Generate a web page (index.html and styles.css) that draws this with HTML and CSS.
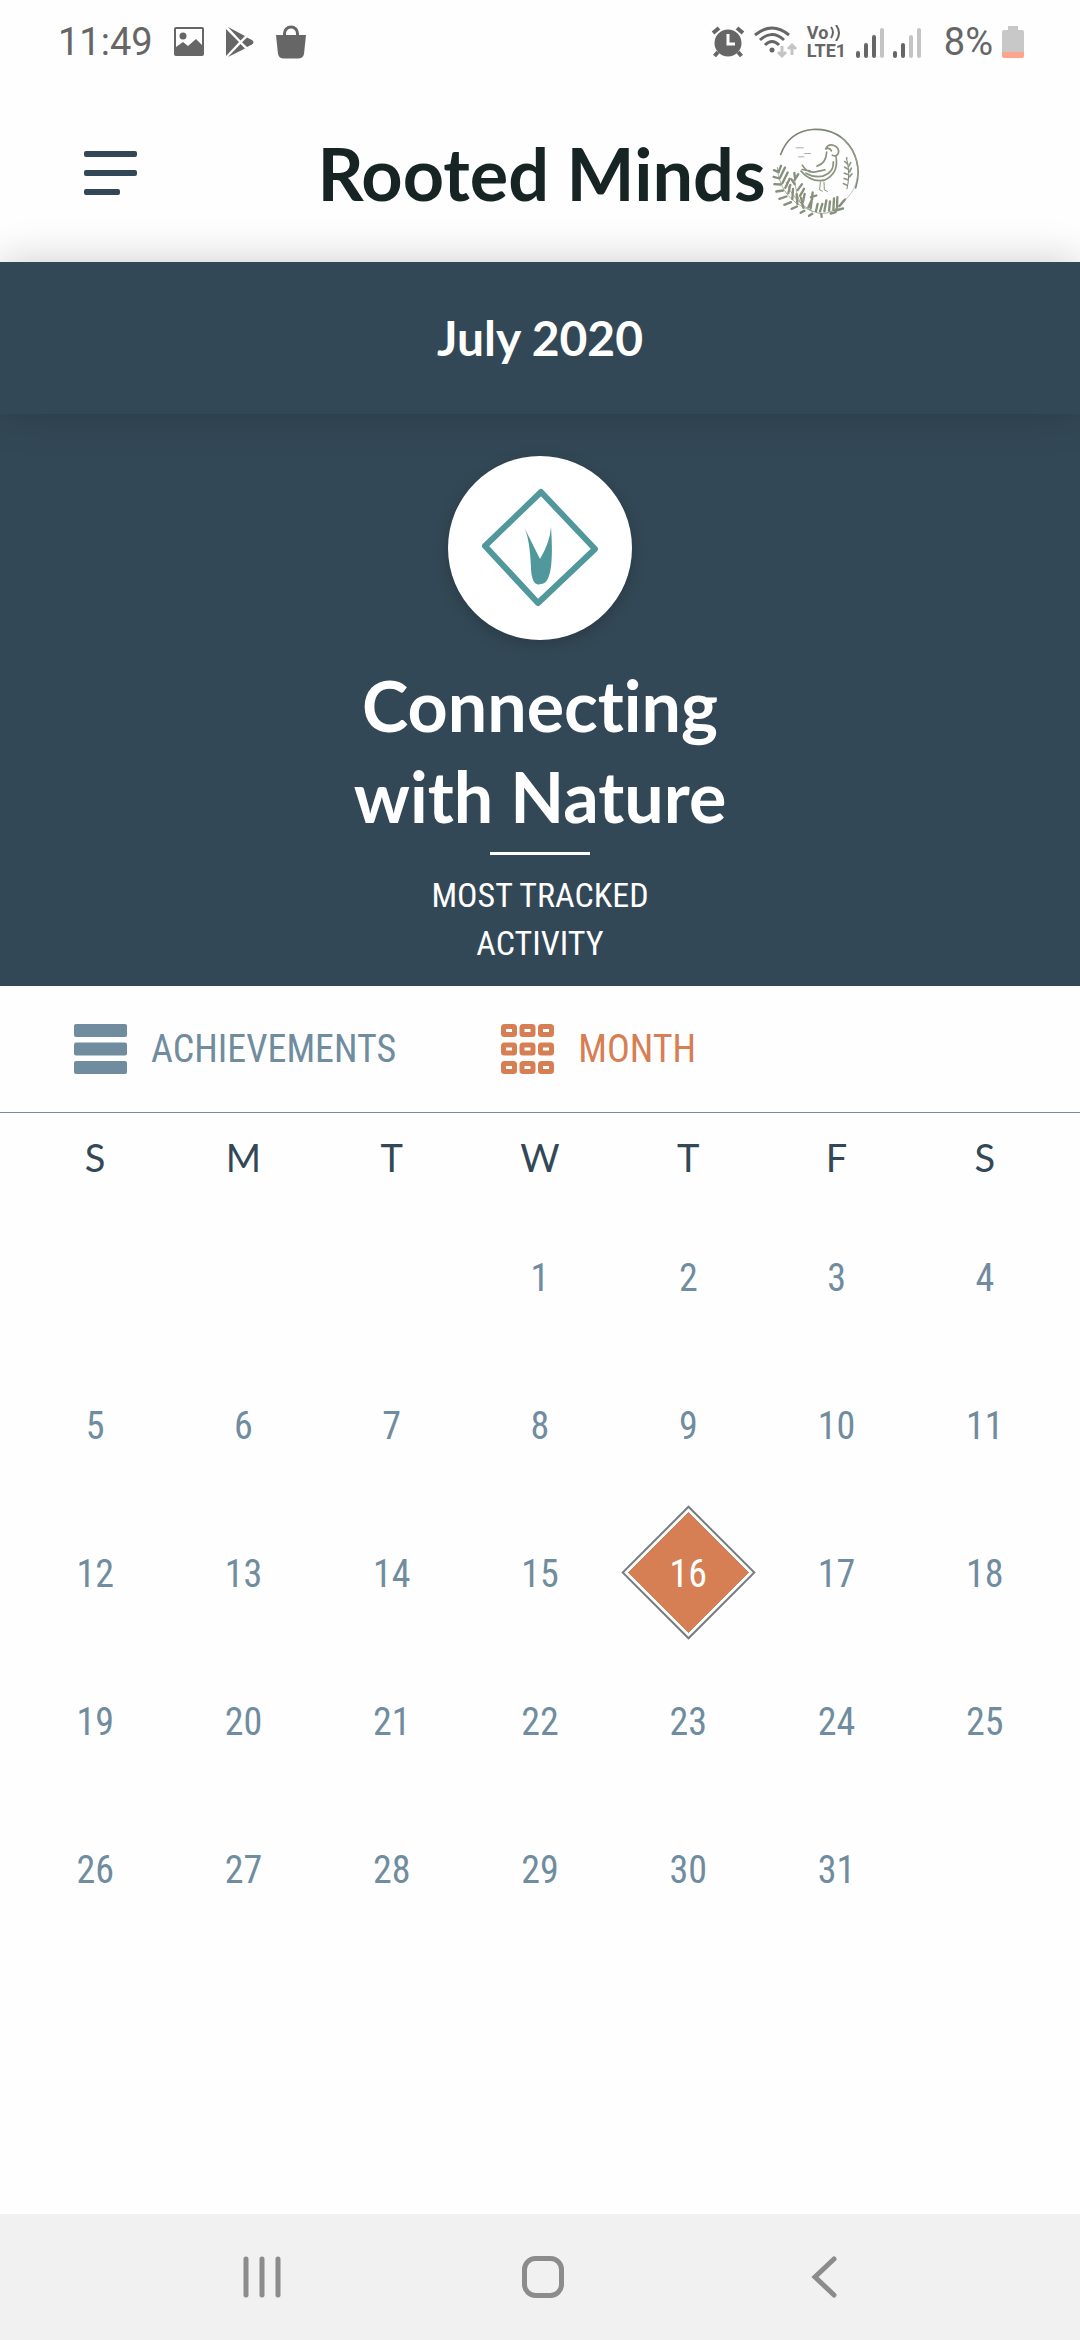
FILE: index.html
```html
<!DOCTYPE html>
<html lang="en">
<head>
<meta charset="utf-8">
<meta name="viewport" content="width=device-width, initial-scale=1">
<title>Rooted Minds</title>
<link rel="stylesheet" href="styles.css">
</head>
<body>
<div class="status-bar">
  <div class="status-left">
    <span class="status-text">11:49</span>
    <svg class="icon" width="32" height="34" viewBox="0 0 32 34" aria-hidden="true"><path fill-rule="evenodd" d="M3 2H29Q31 2 31 4V29Q31 31 29 31H3Q1 31 1 29V4Q1 2 3 2ZM3 4V22L10 17L15 21L23 14L29 20V4ZM10 7.500A3.500 3.500 0 1 1 10 14.500A3.500 3.500 0 1 1 10 7.500Z"/></svg>
    <svg class="icon" width="30" height="34" viewBox="0 0 30 34" aria-hidden="true"><path d="M1 4L14 17L1 31ZM3 2L20 11L15.500 15.500ZM3 32L15.500 19L20 23.500ZM22 12.500L27 15Q30 17.300 27 19.500L22 22L17 17.200Z"/></svg>
    <svg class="icon" width="32" height="34" viewBox="0 0 32 34" aria-hidden="true"><path d="M1 10H31L29 29Q28 33.500 23 33.500H9Q4 33.500 3 29Z"/><path d="M9.500 12V8.500A6.500 6.500 0 0 1 22.500 8.500V12" fill="none" stroke="#666" stroke-width="3"/></svg>
  </div>
  <div class="status-right">
    <svg class="icon" width="34" height="34" viewBox="0 0 34 34" aria-hidden="true"><path d="M7 27L3.500 31M27 27L30.500 31M2 8L8 3M32 8L26 3" fill="none" stroke="#666" stroke-width="4"/><circle cx="17" cy="18" r="13.500"/><path d="M17 9V19H24" fill="none" stroke="#fff" stroke-width="3"/></svg>
    <svg class="icon" width="44" height="34" viewBox="0 0 44 34" aria-hidden="true"><g fill="none" stroke="#666" stroke-width="3"><path d="M1 10Q18-4 35 10"/><path d="M6 15Q18 4 30 15"/><path d="M11 20Q18 13 25 20"/></g><circle cx="18" cy="25" r="2.500"/><path d="M28 21V31M24 27L28 31L32 27M38 30V20M34 24L38 20L42 24" fill="none" stroke="#c4c4c4" stroke-width="3"/></svg>
    <div class="volte">
      <span class="volte-line">Vo<svg class="icon" width="12" height="16" viewBox="0 0 12 16" aria-hidden="true"><path d="M2 2Q6 7 2 13M7 0Q13 8 7 16" fill="none" stroke="#666" stroke-width="2"/></svg></span>
      <span class="volte-line">LTE1</span>
    </div>
    <svg class="icon" width="28" height="34" viewBox="0 0 28 34" aria-hidden="true"><path d="M2 28V31M10 20V31M18 12V31" fill="none" stroke="#666" stroke-width="4" stroke-linecap="round"/><path d="M26 5V31" stroke="#c4c4c4" stroke-width="4" stroke-linecap="round"/></svg>
    <svg class="icon second-sim" width="28" height="34" viewBox="0 0 28 34" aria-hidden="true"><path d="M2 28V31M10 20V31" fill="none" stroke="#666" stroke-width="4" stroke-linecap="round"/><path d="M18 12V31M26 5V31" stroke="#c4c4c4" stroke-width="4" stroke-linecap="round"/></svg>
    <span class="status-text">8%</span>
    <svg class="icon" width="22" height="34" viewBox="0 0 22 34" aria-hidden="true"><path fill="#c8c8c8" d="M6 1H16V5H20Q22 5 22 7V27H0V7Q0 5 2 5H6Z"/><path fill="#fda58c" d="M0 27H22V31Q22 33 20 33H2Q0 33 0 31Z"/></svg>
  </div>
</div>

<header class="app-header">
  <button class="menu-button" type="button" aria-label="Menu">
    <span class="menu-line"></span><span class="menu-line"></span><span class="menu-line short"></span>
  </button>
  <div class="brand">
    <h1 class="brand-name">Rooted Minds</h1>
    <svg class="brand-logo" viewBox="90 50 270 275" aria-hidden="true">
      <g fill="none" stroke="#7d8673" stroke-linecap="round">
        <path d="M116 132Q142 62 212 57Q290 53 330 117Q360 172 341 232" stroke-width="5"/>
        <path d="M300 82Q366 145 341 220Q332 248 310 268" stroke-width="2" stroke="#a4aa9d"/>
        <path d="M162 112H184M188 129H206M170 139H186" stroke-width="3" stroke="#a9afa3"/>
        <g stroke-width="5" stroke="#8b937f">
          <path d="M251 115Q259 99 276 105Q293 112 289 128Q284 140 271 134M251 115Q264 111 268 121"/>
          <path d="M254 125Q252 159 225 167M282 139Q291 189 247 209Q208 217 177 182"/>
          <path d="M274 154Q276 186 242 197Q215 202 192 188M181 164Q195 189 220 184L249 178M180 177L204 181"/>
          <path d="M235 215L233 238L241 242M246 215L247 238L256 243" stroke-width="3"/>
        </g>
        <path d="M106 171Q112 276 233 309Q277 312 303 270M132 215Q151 268 211 303M184 292Q158 254 157 192" stroke-width="2"/>
        <path d="M315 235Q326 190 314 145" stroke-width="3"/>
      </g>
      <g fill="none" stroke="#87907c" stroke-width="7" stroke-linecap="round">
        <path d="M110 185L96 179M112 204L95 199M116 222L97 221M123 240L103 243M133 258L112 265M147 275L127 283M165 288L149 295M187 301L176 307M211 310L201 316M238 311L239 319"/>
        <path d="M110 183L117 166M114 202L129 171M121 218L137 186M130 232L143 205M139 248L145 223M151 266L153 235M166 280L164 251M184 292L177 262"/>
        <path d="M158 221L148 206M158 208L169 191M159 202L157 187M167 239L180 221M174 256L186 235M183 274L188 250M199 290L211 265M206 294L212 246M207 260L223 255"/>
        <path d="M222 302L227 280M234 303L241 280M247 302L253 270M261 300L264 273M274 298L276 264M285 292L286 260M266 309L281 305M280 300L303 294M292 287L309 267"/>
      </g>
      <g fill="none" stroke="#8f9884" stroke-width="5" stroke-linecap="round"><path d="M317 161L308 153M320 177L308 170M320 193L307 188M319 208L306 204M315 224L304 219M320 168L326 156M323 184L328 173M323 199L330 190M314 145V142"/></g>
    </svg>
  </div>
</header>

<main class="content">
  <h2 class="month-band">July 2020</h2>

  <section class="summary">
    <div class="badge">
      <svg width="184" height="184" viewBox="0 0 184 184" aria-hidden="true">
        <path d="M93 36L147 93L90 147L37 90Z" fill="none" stroke="#51989c" stroke-width="6" stroke-linejoin="round"/>
        <path d="M76 71L92 103Q102 86 103 71Q107 128 93 128Q84 131 83 113Q82 83 76 71Z" fill="#51989c"/>
      </svg>
    </div>
    <p class="activity">Connecting<br>with Nature</p>
    <hr class="rule">
    <p class="caption">MOST TRACKED<br>ACTIVITY</p>
  </section>

  <nav class="tabs" aria-label="View">
    <button class="tab" type="button">
      <svg width="53" height="50" viewBox="0 0 53 50" fill="currentColor" aria-hidden="true"><rect width="53" height="13" rx="2"/><rect y="18.500" width="53" height="13" rx="2"/><rect y="37" width="53" height="13" rx="2"/></svg>
      ACHIEVEMENTS
    </button>
    <button class="tab active" type="button" aria-current="true">
      <svg width="53" height="50" viewBox="0 0 53 50" fill="none" stroke="currentColor" stroke-width="5" aria-hidden="true"><g id="cells"><rect x="2.500" y="2.500" width="11" height="8" rx="1"/><rect x="21" y="2.500" width="11" height="8" rx="1"/><rect x="39.500" y="2.500" width="11" height="8" rx="1"/></g><use href="#cells" y="18.500"/><use href="#cells" y="37"/></svg>
      MONTH
    </button>
  </nav>

  <table class="calendar">
    <thead>
      <tr><th scope="col">S</th><th scope="col">M</th><th scope="col">T</th><th scope="col">W</th><th scope="col">T</th><th scope="col">F</th><th scope="col">S</th></tr>
    </thead>
    <tbody>
      <tr><td></td><td></td><td></td><td>1</td><td>2</td><td>3</td><td>4</td></tr>
      <tr><td>5</td><td>6</td><td>7</td><td>8</td><td>9</td><td>10</td><td>11</td></tr>
      <tr><td>12</td><td>13</td><td>14</td><td>15</td><td class="today"><span class="diamond"></span><span class="today-number">16</span></td><td>17</td><td>18</td></tr>
      <tr><td>19</td><td>20</td><td>21</td><td>22</td><td>23</td><td>24</td><td>25</td></tr>
      <tr><td>26</td><td>27</td><td>28</td><td>29</td><td>30</td><td>31</td><td></td></tr>
    </tbody>
  </table>
</main>

<footer class="system-nav">
  <button class="system-button" type="button" aria-label="Recent apps"><svg width="42" height="42" viewBox="0 0 42 42" aria-hidden="true"><path d="M5 3V39M21 3V39M37 3V39"/></svg></button>
  <button class="system-button" type="button" aria-label="Home"><svg width="42" height="42" viewBox="0 0 42 42" aria-hidden="true"><rect x="2.500" y="2.500" width="37" height="37" rx="11"/></svg></button>
  <button class="system-button" type="button" aria-label="Back"><svg width="42" height="42" viewBox="0 0 42 42" aria-hidden="true"><path d="M31 3L12 21L31 39"/></svg></button>
</footer>
</body>
</html>
```
FILE: styles.css
```css
* { box-sizing: border-box; }

body {
  margin: 0;
  min-height: 100vh;
  display: flex;
  flex-direction: column;
  background: #fefefe;
  color: #334856;
  font-family: Lato, "Open Sans", sans-serif;
  font-variant-ligatures: none;
}

button {
  border: 0;
  padding: 0;
  background: none;
  color: inherit;
  font: inherit;
  cursor: pointer;
}

h1, h2, p { margin: 0; }

svg { display: block; flex: none; }

/* Status bar */
.status-bar {
  display: flex;
  justify-content: space-between;
  align-items: center;
  height: 84px;
  padding: 0 56px 0 58px;
  color: #666;
  font-family: Roboto, sans-serif;
}

.status-left, .status-right {
  display: flex;
  align-items: center;
}

.status-left { gap: 20px; }
.status-right { gap: 9px; }
.status-text { font-size: 38px; line-height: 44px; }
.second-sim { margin-right: 14px; }
.icon { fill: #666; }

.volte { width: 40px; }

.volte-line {
  display: flex;
  align-items: center;
  gap: 1px;
  font-size: 18px;
  line-height: 18px;
  font-weight: 700;
}

/* App header */
.app-header {
  display: flex;
  align-items: center;
  height: 178px;
  padding: 0 38px 0 84px;
}

.menu-button {
  display: flex;
  flex-direction: column;
  gap: 13px;
  width: 53px;
}

.menu-line {
  height: 6px;
  width: 100%;
  border-radius: 2px;
  background: #334856;
}

.menu-line.short { width: 36px; }

.brand {
  flex: 1;
  display: flex;
  justify-content: center;
  align-items: center;
  gap: 6px;
}

.brand-name {
  color: #162423;
  font-size: 72px;
  line-height: 84px;
  font-weight: 700;
}

.brand-logo { width: 90px; height: 92px; }

/* Month and most tracked activity */
.month-band {
  position: relative;
  padding: 48px 0;
  background: #334856;
  box-shadow: 0 0 40px rgba(0, 0, 0, 0.2);
  color: #fff;
  font-size: 48px;
  line-height: 56px;
  font-weight: 700;
  text-align: center;
}

.summary {
  display: flex;
  flex-direction: column;
  align-items: center;
  padding: 42px 0 19px;
  background: #334856;
  color: #fff;
  text-align: center;
}

.badge {
  border-radius: 50%;
  background: #fff;
  box-shadow: 0 4px 16px rgba(0, 0, 0, 0.2);
}

.activity {
  padding-top: 20px;
  font-size: 70px;
  line-height: 91px;
  font-weight: 700;
}

.rule {
  width: 100px;
  height: 3px;
  margin: 10px 0 16px;
  border: 0;
  background: #fff;
}

.caption, .tab, .calendar td {
  font-family: "Roboto Condensed", "Liberation Sans Narrow", sans-serif;
  font-size: 38px;
}

.caption {
  font-size: 34px;
  line-height: 48px;
}

/* View tabs */
.tabs {
  display: flex;
  gap: 105px;
  padding: 0 74px;
  border-bottom: 1px solid #768e95;
}

.tab {
  display: flex;
  align-items: center;
  gap: 24px;
  height: 126px;
  color: #708c9f;
}

.tab.active { color: #d67f55; }

/* Calendar */
.calendar {
  width: 100%;
  padding: 0 21px;
  border-spacing: 0;
  table-layout: fixed;
  text-align: center;
}

.calendar th {
  height: 89px;
  padding: 0 0 2px;
  font-size: 38px;
  font-weight: 400;
}

.calendar td {
  height: 148px;
  padding: 4px 0 0;
  color: #708c9f;
}

.calendar .today {
  position: relative;
  color: #fff;
}

.diamond {
  position: absolute;
  inset: 0;
  margin: auto;
  width: 95px;
  height: 95px;
  padding: 3px;
  border: 2px solid #777d82;
  background: #d67f55 content-box;
  transform: rotate(45deg);
}

.today-number { position: relative; }

/* System navigation */
.system-nav {
  display: flex;
  justify-content: center;
  gap: 239px;
  height: 126px;
  margin-top: auto;
  padding-left: 6px;
  background: #f1f1f1;
}

.system-button svg {
  fill: none;
  stroke: #8c8c8c;
  stroke-width: 5;
  stroke-linecap: round;
}
```
